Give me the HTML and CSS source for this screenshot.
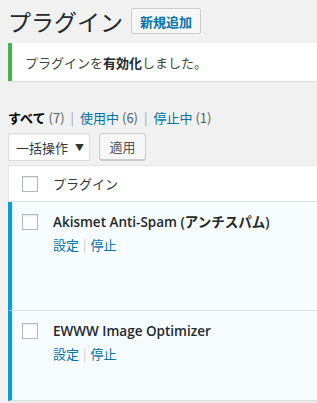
FILE: index.html
```html
<!DOCTYPE html>
<html lang="ja">
<head>
<meta charset="utf-8">
<link rel="stylesheet" href="styles.css">
</head>
<body>
<div class="wrap">
  <div class="heading">
    <h1 class="title">プラグイン</h1>
    <a class="add-new">新規追加</a>
  </div>
  <div class="notice"><p>プラグインを<b>有効化</b>しました。</p></div>
  <ul class="filters">
    <li class="current">すべて <span class="count">(7)</span></li>
    <li class="sep">|</li>
    <li><a>使用中</a> <span class="count">(6)</span></li>
    <li class="sep">|</li>
    <li><a>停止中</a> <span class="count">(1)</span></li>
  </ul>
  <div class="tablenav">
    <div class="select">一括操作 <span class="arrow">▼</span></div>
    <div class="btn">適用</div>
  </div>
  <div class="table">
    <div class="row head">
      <span class="cb"></span>
      <span class="col-name">プラグイン</span>
    </div>
    <div class="row plugin first">
      <span class="cb"></span>
      <div class="col-name">
        <div class="pname">Akismet Anti-Spam (アンチスパム)</div>
        <div class="actions"><a>設定</a><span class="bar">|</span><a>停止</a></div>
      </div>
    </div>
    <div class="row plugin second">
      <span class="cb"></span>
      <div class="col-name">
        <div class="pname">EWWW Image Optimizer</div>
        <div class="actions"><a>設定</a><span class="bar">|</span><a>停止</a></div>
      </div>
    </div>
  </div>
</div>
</body>
</html>
```
FILE: styles.css
```css
html, body {
  margin: 0;
  padding: 0;
  background: #f1f1f1;
  overflow: hidden;
}
body {
  font-family: "Noto Sans", "Noto Sans CJK JP", sans-serif;
  font-size: 13px;
  color: #444;
  width: 317px;
  height: 403px;
}
.wrap {
  padding-left: 8px;
  width: 340px;
}
.heading {
  display: flex;
  align-items: center;
  padding-top: 8px;
  height: 26px;
}
.title {
  margin: 0;
  font-family: "Noto Sans CJK JP", sans-serif;
  font-weight: 400;
  font-size: 23px;
  line-height: 26px;
  color: #23282d;
}
.add-new {
  margin-left: 8px;
  box-sizing: border-box;
  height: 26px;
  width: 70px;
  border: 1px solid #ccc;
  border-radius: 2px;
  background: #f7f7f7;
  color: #0073aa;
  font-family: "Noto Sans CJK JP", sans-serif;
  font-weight: 700;
  font-size: 13px;
  display: flex;
  align-items: center;
  justify-content: center;
}
.notice {
  margin-top: 9px;
  height: 38px;
  background: #fff;
  border-left: 4px solid #46b450;
  box-shadow: 0 1px 1px rgba(0,0,0,0.08);
  display: flex;
  align-items: center;
}
.notice p {
  margin: 0 0 0 13px;
  font-family: "Noto Sans CJK JP", sans-serif;
  font-size: 13px;
  color: #444;
}
.notice b { font-weight: 700; color: #23282d; }
.filters {
  list-style: none;
  margin: 27px 0 0;
  padding: 0;
  display: flex;
  align-items: center;
  height: 18px;
  font-family: "Noto Sans CJK JP", sans-serif;
  font-size: 13px;
}
.filters li { white-space: pre; }
.filters .current { font-weight: 700; color: #000; }
.filters .current .count { font-weight: 400; }
.filters .count { color: #555d66; }
.filters a { color: #0073aa; }
.filters .sep { color: #a0a5aa; padding: 0 6px; }
.tablenav {
  margin-top: 7px;
  display: flex;
  gap: 9px;
  height: 28px;
}
.select {
  box-sizing: border-box;
  width: 82px;
  height: 28px;
  background: #fff;
  border: 1px solid #ddd;
  box-shadow: inset 0 1px 2px rgba(0,0,0,0.07);
  font-family: "Noto Sans CJK JP", sans-serif;
  font-size: 13px;
  color: #32373c;
  display: flex;
  align-items: center;
  padding-left: 7px;
}
.select .arrow { font-size: 9px; margin-left: 7px; color: #333; }
.btn {
  box-sizing: border-box;
  width: 47px;
  height: 27px;
  border: 1px solid #ccc;
  border-radius: 3px;
  background: #f7f7f7;
  box-shadow: 0 1px 0 #ccc;
  font-family: "Noto Sans CJK JP", sans-serif;
  font-size: 13px;
  color: #555;
  display: flex;
  align-items: center;
  justify-content: center;
}
.table {
  margin-top: 4px;
  background: #fff;
  border: 1px solid #e5e5e5;
  border-right: none;
}
.row {
  display: flex;
  align-items: flex-start;
}
.row.head {
  height: 35px;
  align-items: center;
  border-bottom: 1px solid #e1e1e1;
  background: #fff;
}
.cb {
  box-sizing: border-box;
  width: 16px;
  height: 16px;
  margin-left: 13px;
  border: 1px solid #b4b9be;
  background: #fff;
  box-shadow: inset 0 1px 2px rgba(0,0,0,0.1);
  flex: none;
}
.row.head .col-name {
  margin-left: 15px;
  font-family: "Noto Sans CJK JP", sans-serif;
  font-size: 13px;
  color: #32373c;
}
.plugin {
  background: #f7fcfe;
  border-left: 4px solid #00a0d2;
  margin-left: -1px;
}
.plugin .cb { margin-left: 10px; margin-top: 12px; }
.plugin .col-name { margin-left: 15px; padding-top: 10px; }
.plugin.first { height: 108px; border-bottom: 1px solid #e1e1e1; }
.plugin.second { height: 89px; border-bottom: 1px solid #e1e1e1; }
.pname {
  font-family: "Open Sans", "Noto Sans CJK JP", sans-serif;
  font-weight: 600;
  font-size: 13.5px;
  color: #23282d;
  line-height: 20px;
}
.actions {
  margin-top: 4px;
  font-family: "Noto Sans CJK JP", sans-serif;
  font-size: 13px;
  line-height: 18px;
  color: #0073aa;
}
.actions .bar { color: #ccc; padding: 0 4px; }
```
